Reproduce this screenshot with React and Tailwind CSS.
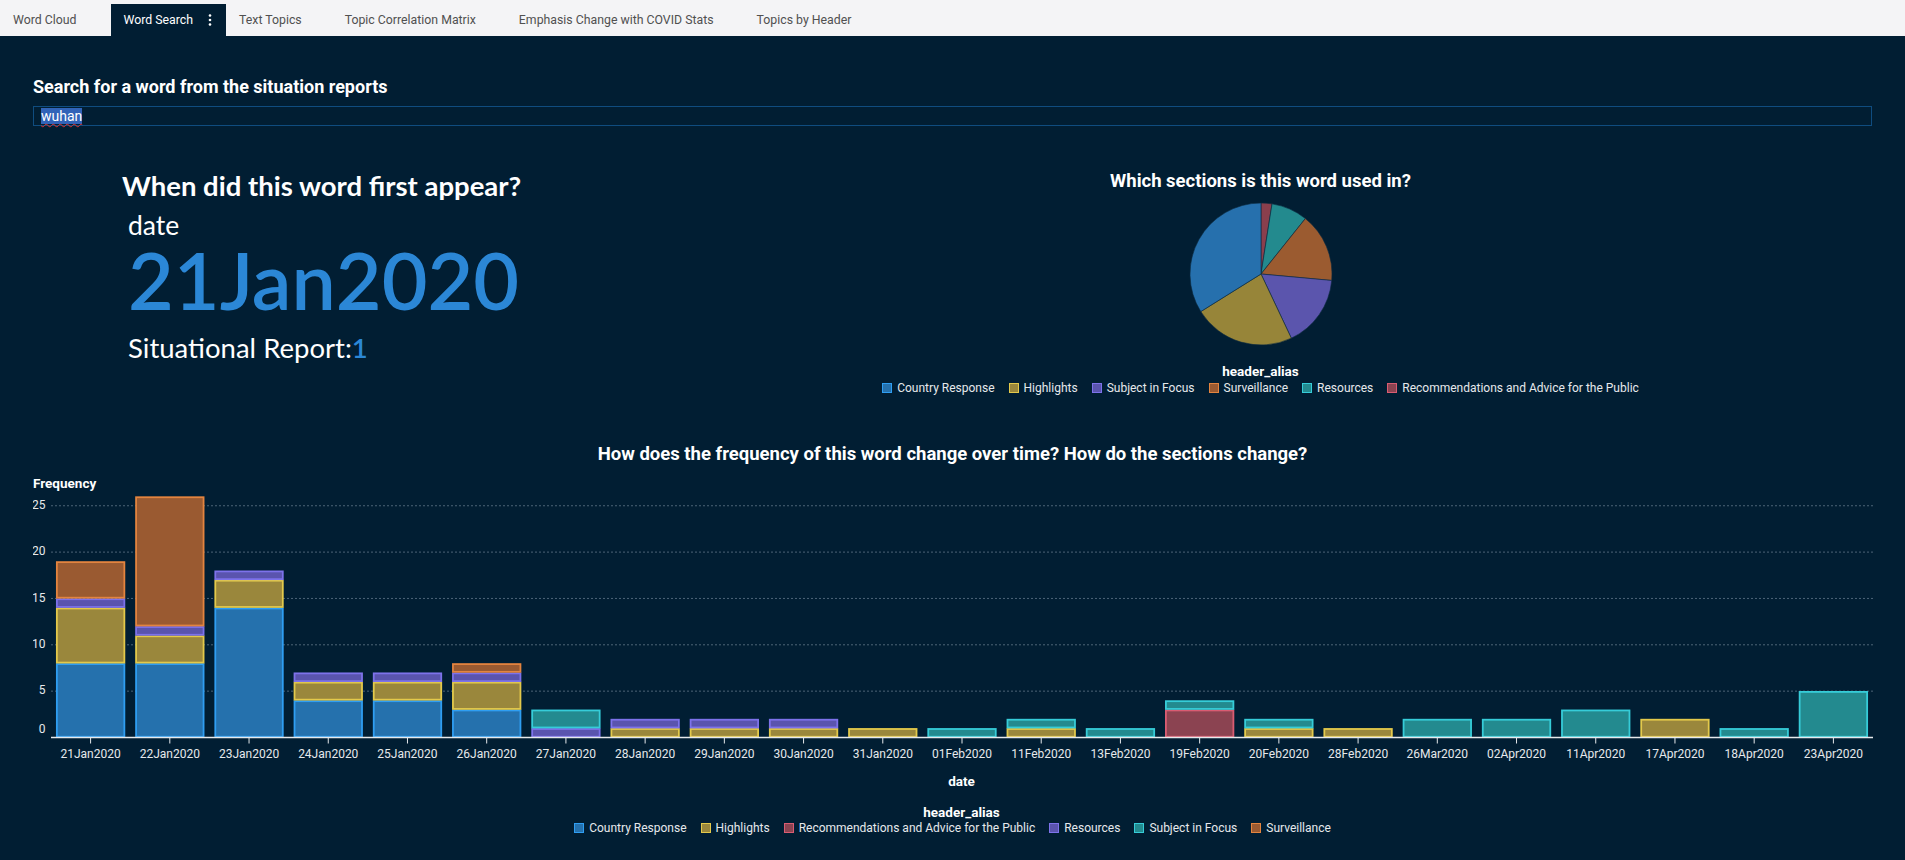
import React from 'react';

const PAL = {
  blue: { fill: '#2571ad', stroke: '#2f9ef2', pie: '#2670ad' },
  yellow: { fill: '#9a873c', stroke: '#e3c94b', pie: '#978539' },
  red: { fill: '#8b4351', stroke: '#d95c72', pie: '#8a3f4d' },
  purple: { fill: '#5a54ae', stroke: '#7d72ea', pie: '#5b55ad' },
  teal: { fill: '#238a8f', stroke: '#36ccd8', pie: '#238a8e' },
  orange: { fill: '#9a5a31', stroke: '#e3843f', pie: '#9b5b30' },
};

const tabs = ['Word Cloud', 'Word Search', 'Text Topics', 'Topic Correlation Matrix', 'Emphasis Change with COVID Stats', 'Topics by Header'];

const pieSlices = [
  { color: 'red', v: 3 },
  { color: 'teal', v: 10 },
  { color: 'orange', v: 19 },
  { color: 'purple', v: 20 },
  { color: 'yellow', v: 28 },
  { color: 'blue', v: 41 },
];

const pieLegend = [
  ['blue', 'Country Response'],
  ['yellow', 'Highlights'],
  ['purple', 'Subject in Focus'],
  ['orange', 'Surveillance'],
  ['teal', 'Resources'],
  ['red', 'Recommendations and Advice for the Public'],
];

const barLegend = [
  ['blue', 'Country Response'],
  ['yellow', 'Highlights'],
  ['red', 'Recommendations and Advice for the Public'],
  ['purple', 'Resources'],
  ['teal', 'Subject in Focus'],
  ['orange', 'Surveillance'],
];

// stack order bottom -> top
const stackOrder = ['blue', 'yellow', 'red', 'purple', 'teal', 'orange'];

const bars = [
  ['21Jan2020', { blue: 8, yellow: 6, purple: 1, orange: 4 }],
  ['22Jan2020', { blue: 8, yellow: 3, purple: 1, orange: 14 }],
  ['23Jan2020', { blue: 14, yellow: 3, purple: 1 }],
  ['24Jan2020', { blue: 4, yellow: 2, purple: 1 }],
  ['25Jan2020', { blue: 4, yellow: 2, purple: 1 }],
  ['26Jan2020', { blue: 3, yellow: 3, purple: 1, orange: 1 }],
  ['27Jan2020', { purple: 1, teal: 2 }],
  ['28Jan2020', { yellow: 1, purple: 1 }],
  ['29Jan2020', { yellow: 1, purple: 1 }],
  ['30Jan2020', { yellow: 1, purple: 1 }],
  ['31Jan2020', { yellow: 1 }],
  ['01Feb2020', { teal: 1 }],
  ['11Feb2020', { yellow: 1, teal: 1 }],
  ['13Feb2020', { teal: 1 }],
  ['19Feb2020', { red: 3, teal: 1 }],
  ['20Feb2020', { yellow: 1, teal: 1 }],
  ['28Feb2020', { yellow: 1 }],
  ['26Mar2020', { teal: 2 }],
  ['02Apr2020', { teal: 2 }],
  ['11Apr2020', { teal: 3 }],
  ['17Apr2020', { yellow: 2 }],
  ['18Apr2020', { teal: 1 }],
  ['23Apr2020', { teal: 5 }],
];

function Swatch({ color }) {
  return (
    <span
      className="inline-block h-[10px] w-[10px] border-[1.5px]"
      style={{ background: PAL[color].fill, borderColor: PAL[color].stroke }}
    />
  );
}

function Legend({ items }) {
  return (
    <div className="flex items-center justify-center gap-[14px] text-[12px] leading-4 text-[#e6e9ec]">
      {items.map(([c, label]) => (
        <div key={label} className="flex items-center gap-[5px]">
          <Swatch color={c} />
          <span>{label}</span>
        </div>
      ))}
    </div>
  );
}

function Pie() {
  const total = pieSlices.reduce((s, p) => s + p.v, 0);
  const cx = 72, cy = 72, r = 71;
  let acc = 0;
  const pt = (a) => [cx + r * Math.sin(a), cy - r * Math.cos(a)];
  return (
    <svg width="144" height="144" viewBox="0 0 144 144">
      {pieSlices.map((s) => {
        const a0 = (acc / total) * Math.PI * 2;
        acc += s.v;
        const a1 = (acc / total) * Math.PI * 2;
        const [x0, y0] = pt(a0);
        const [x1, y1] = pt(a1);
        const large = a1 - a0 > Math.PI ? 1 : 0;
        return (
          <path
            key={s.color}
            d={`M${cx},${cy} L${x0},${y0} A${r},${r} 0 ${large} 1 ${x1},${y1} Z`}
            fill={PAL[s.color].pie}
            stroke="#0b2a40"
            strokeWidth="0.6"
          />
        );
      })}
    </svg>
  );
}

function BarChart() {
  const W = 1840, H = 270;
  const x0 = 18, x1 = 1840;
  const zero = 242.5, unit = 9.27;
  const band = (x1 - x0) / bars.length;
  const bw = 69;
  const grid = [5, 10, 15, 20, 25];
  return (
    <svg width={W} height={H} viewBox={`0 0 ${W} ${H}`} className="block">
      {grid.map((g) => (
        <g key={g}>
          <line x1={x0} x2={x1} y1={zero - g * unit} y2={zero - g * unit} stroke="#4d6477" strokeWidth="1" strokeDasharray="2 2" />
          <text x="12.5" y={zero - g * unit} textAnchor="end" dominantBaseline="middle" fill="#e6e9ec" fontSize="12" fontFamily="Roboto, sans-serif">{g}</text>
        </g>
      ))}
      <text x="12.5" y={zero - 8} textAnchor="end" dominantBaseline="middle" fill="#e6e9ec" fontSize="12" fontFamily="Roboto, sans-serif">0</text>
      {bars.map(([label, vals], i) => {
        const bx = x0 + band * i + (band - bw) / 2;
        const cxm = x0 + band * i + band / 2;
        let base = 0;
        return (
          <g key={label}>
            {stackOrder.filter((c) => vals[c]).map((c) => {
              const v = vals[c];
              const yTop = zero - (base + v) * unit;
              const h = v * unit;
              base += v;
              return (
                <rect key={c} x={bx + 0.75} y={yTop + 0.75} width={bw - 1.5} height={h - 1.5}
                  fill={PAL[c].fill} stroke={PAL[c].stroke} strokeWidth="1.8" />
              );
            })}
            <line x1={cxm} x2={cxm} y1={zero} y2={zero + 6} stroke="#e6e9ec" strokeWidth="1" />
            <text x={cxm} y={zero + 17} textAnchor="middle" dominantBaseline="middle" fill="#e6e9ec" fontSize="12" fontFamily="Roboto, sans-serif">{label}</text>
          </g>
        );
      })}
      <line x1={x0} x2={x1} y1={zero} y2={zero} stroke="#e6e9ec" strokeWidth="1.5" />
    </svg>
  );
}

export default function App() {
  return (
    <div className="min-h-screen bg-[#011e33] font-['Roboto',sans-serif] text-white">
      {/* tab bar */}
      <div className="flex h-9 items-end bg-[#f4f4f6] text-[12.3px]">
        {tabs.map((t, i) =>
          t === 'Word Search' ? (
            <div key={t} className="flex h-8 items-center bg-[#011e33] pl-[13px] pr-[9px] text-white">
              <span>{t}</span>
              <svg width="22" height="16" viewBox="0 0 22 16" className="ml-[2px]">
                <circle cx="15" cy="3.5" r="1.3" fill="#fff" />
                <circle cx="15" cy="8" r="1.3" fill="#fff" />
                <circle cx="15" cy="12.5" r="1.3" fill="#fff" />
              </svg>
            </div>
          ) : (
            <div key={t} className={`flex h-8 items-center pl-[13px] text-[#505050] ${i === 0 ? 'pr-[34px]' : 'pr-[30px]'}`}>
              {t}
            </div>
          )
        )}
      </div>

      <div className="px-[33px]">
        <div className="mt-[40px] text-[18px] font-bold leading-[22px]">Search for a word from the situation reports</div>
        <div className="mt-[8px] flex h-5 items-center border border-[#0f4c7f] pl-[7px] text-[14px]">
          <span className="bg-[#3163b8] leading-4 text-white underline decoration-[#e03030] decoration-wavy decoration-1 underline-offset-2">wuhan</span>
        </div>

        <div className="grid grid-cols-[616px_1fr]">
          <div className="pl-[89px] font-['Lato',sans-serif]">
            <div className="mt-[44px] text-[27.5px] font-bold leading-[32px]">When did this word first appear?</div>
            <div className="pl-[6px]">
              <div className="mt-[8px] text-[26.5px] leading-[30px]">date</div>
              <div className="mt-[2px] text-[79px] font-semibold leading-[76px] text-[#2b87d6]">21Jan2020</div>
              <div className="mt-[15px] text-[27.5px] leading-[30px]">
                Situational Report:<span className="font-semibold text-[#2b87d6]">1</span>
              </div>
            </div>
          </div>

          <div className="flex flex-col items-center">
            <div className="mt-[44px] text-[18.5px] font-bold leading-[22px]">Which sections is this word used in?</div>
            <div className="mt-[10px]">
              <Pie />
            </div>
            <div className="mt-[17px] text-[13.5px] font-bold leading-4">header_alias</div>
            <div className="mt-[1px]">
              <Legend items={pieLegend} />
            </div>
          </div>
        </div>

        <div className="mt-[47px] text-center text-[18.5px] font-bold leading-[22px]">
          How does the frequency of this word change over time? How do the sections change?
        </div>
        <div className="mt-[10px] text-[13.5px] font-bold leading-4">Frequency</div>
        <div className="mt-[4px]">
          <BarChart />
        </div>
        <div className="mt-[8px] pl-[18px] text-center text-[13.5px] font-bold leading-4">date</div>
        <div className="mt-[15px] pl-[18px] text-center text-[13.5px] font-bold leading-4">header_alias</div>
        <Legend items={barLegend} />
      </div>
    </div>
  );
}
